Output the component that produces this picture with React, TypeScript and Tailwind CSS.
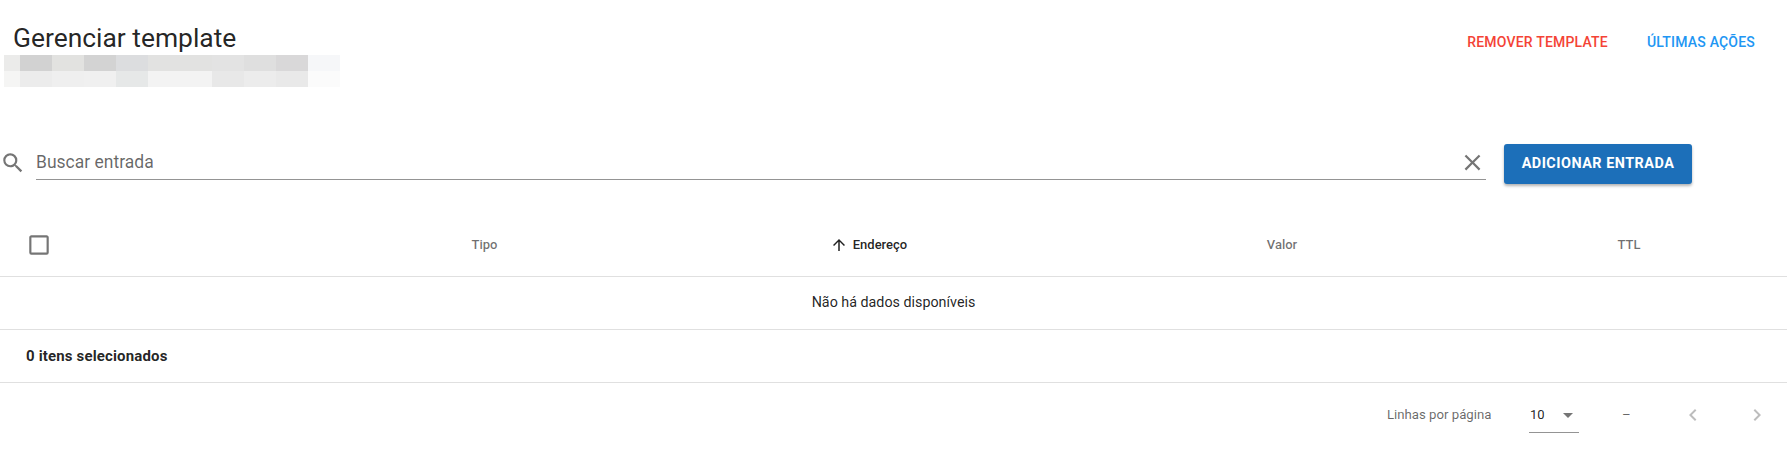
import React from 'react'

const blurTop = ['bg-[#ebebea]', 'bg-[#d2d2d2]', 'bg-[#e2e2e0]', 'bg-[#d3d3d3]', 'bg-[#dcdddf]', 'bg-[#e2e2e1]', 'bg-[#e2e2e1]', 'bg-[#e3e3e3]', 'bg-[#dfdfdf]', 'bg-[#d9d8d9]', 'bg-[#f6f7f9]']
const blurBottom = ['bg-[#f5f5f4]', 'bg-[#ececec]', 'bg-[#efefef]', 'bg-[#f0f0f0]', 'bg-[#e6e8e8]', 'bg-[#f3f3f3]', 'bg-[#f3f3f3]', 'bg-[#e8e8e8]', 'bg-[#ececec]', 'bg-[#e9e9e9]', 'bg-[#fbfbfb]']

function Icon({ d, className }: { d: string; className: string }) {
    return (
        <svg viewBox="0 0 24 24" className={className} fill="currentColor">
            <path d={d} />
        </svg>
    )
}

function BlurRow({ cells }: { cells: string[] }) {
    return (
        <div className="flex h-4">
            {cells.map((c, i) => (
                <div key={i} className={`h-4 ${i === 0 ? 'w-4' : 'w-8'} ${c}`}></div>
            ))}
        </div>
    )
}

export default function App() {
    return (
        <div className="h-[475px] w-full bg-white overflow-hidden font-['Roboto',sans-serif] text-[#000000de]">
            <div className="flex justify-between items-start h-[144px]">
                <div className="pt-[21px] pl-1">
                    <h1 className="pl-[9px] text-[26.4px] leading-[34px] h-[34px] font-normal">Gerenciar template</h1>
                    <BlurRow cells={blurTop} />
                    <BlurRow cells={blurBottom} />
                </div>
                <div className="flex pt-[33px] pr-8 gap-[39px] text-sm leading-[18px] font-medium tracking-[0.2px]">
                    <span className="text-[#f44336]">REMOVER TEMPLATE</span>
                    <span className="text-[#2196f3]">ÚLTIMAS AÇÕES</span>
                </div>
            </div>

            <div className="flex items-start h-[64px]">
                <div className="pt-[6px] w-6 text-[#757575]">
                    <Icon className="w-[26px] h-[26px] max-w-none" d="M9.5,3A6.5,6.5 0 0,1 16,9.5C16,11.11 15.41,12.59 14.44,13.73L14.71,14H15.5L20.5,19L19,20.5L14,15.5V14.71L13.73,14.44C12.59,15.41 11.11,16 9.5,16A6.5,6.5 0 0,1 3,9.5A6.5,6.5 0 0,1 9.5,3M9.5,5C7,5 5,7 5,9.5C5,12 7,14 9.5,14C12,14 14,12 14,9.5C14,7 12,5 9.5,5Z" />
                </div>
                <div className="ml-3 w-[1450px] h-9 flex items-center justify-between border-b border-[#949494] pt-[1px]">
                    <span className="text-[17.5px] text-[#00000099]">Buscar entrada</span>
                    <Icon className="w-[27px] h-[27px] text-[#757575]" d="M19,6.41L17.59,5L12,10.59L6.41,5L5,6.41L10.59,12L5,17.59L6.41,19L12,13.41L17.59,19L19,17.59L13.41,12L19,6.41Z" />
                </div>
                <button className="ml-[18px] w-[188px] h-10 rounded-[3px] bg-[#1c6fb9] text-white text-[14.4px] font-bold tracking-[0.5px] shadow-[0_2px_3px_rgba(0,0,0,0.3)]">
                    ADICIONAR ENTRADA
                </button>
            </div>

            <div className="grid grid-cols-[320px_329px_444px_378px_316px] items-center h-[69px] pt-[5px] border-b border-[#e0e0e0] text-[13px] font-medium text-[#0000008f]">
                <div className="pl-[26px] flex text-[#757575]">
                    <Icon className="w-[26px] h-[26px]" d="M19,3H5C3.89,3 3,3.89 3,5V19A2,2 0 0,0 5,21H19A2,2 0 0,0 21,19V5C21,3.89 20.1,3 19,3M19,5V19H5V5H19Z" />
                </div>
                <div className="text-center">Tipo</div>
                <div className="flex justify-center items-center pr-[5px] text-[#000000de]">
                    <Icon className="w-[18px] h-[18px] mr-[5px]" d="M4 12l1.41 1.41L11 7.83V20h2V7.83l5.58 5.59L20 12l-8-8-8 8z" />
                    Endereço
                </div>
                <div className="text-center">Valor</div>
                <div className="text-center">TTL</div>
            </div>

            <div className="h-[53px] flex items-center justify-center border-b border-[#e0e0e0] text-[14.3px]">
                Não há dados disponíveis
            </div>

            <div className="h-[53px] flex items-center pl-[26px] border-b border-[#e0e0e0] text-[15px] font-bold tracking-[0.15px]">
                0 itens selecionados
            </div>

            <div className="flex items-center h-[64px] pl-[1387px] text-[13.2px]">
                <span className="w-[142px] text-[#00000099]">Linhas por página</span>
                <div className="w-[50px] h-[32px] flex items-center justify-between border-b border-[#949494] mt-[4px] pb-[4px] text-[13px]">
                    <span className="pl-[1px]">10</span>
                    <Icon className="w-6 h-6 -mr-[1px] text-[#757575]" d="M7,10L12,15L17,10H7Z" />
                </div>
                <span className="ml-[43px] w-[6px] text-[#00000099]">–</span>
                <div className="ml-[53px] flex gap-10 text-[#bdbdbd]">
                    <Icon className="w-6 h-6" d="M15.41,16.58L10.83,12L15.41,7.41L14,6L8,12L14,18L15.41,16.58Z" />
                    <Icon className="w-6 h-6" d="M8.59,16.58L13.17,12L8.59,7.41L10,6L16,12L10,18L8.59,16.58Z" />
                </div>
            </div>
        </div>
    )
}
